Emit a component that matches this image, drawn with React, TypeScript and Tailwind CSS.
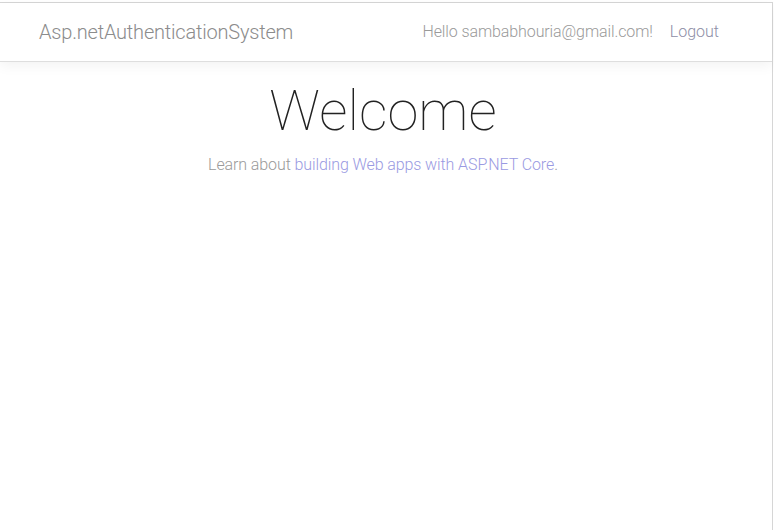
export default function App() {
  return (
    <div className="h-[530px] w-[774px] overflow-hidden bg-white pt-[2px] font-['Roboto',sans-serif] font-light">
      <div className="h-[528px] w-[773px] border-t border-r border-[#d6d6d6]">
        <header className="flex h-[59px] items-center justify-between border-b border-[#dedede] pl-[39px] pr-[53px] shadow-[0_4px_12px_rgba(0,0,0,0.05)]">
          <a className="text-[20px] tracking-[-0.2px] text-[#8c8c8c]">Asp.netAuthenticationSystem</a>
          <nav className="flex items-center gap-[17px] text-[16px]">
            <span className="tracking-[-0.1px] text-[#9a9a9a]">Hello sambabhouria@gmail.com!</span>
            <a className="text-[#8e8ea6]">Logout</a>
          </nav>
        </header>
        <main className="w-[766px] pt-[14px] text-center">
          <h1 className="text-[56px] leading-[70px] font-thin text-[#222]">Welcome</h1>
          <p className="mt-[7px] text-[16px] tracking-[-0.1px] text-[#9a9a9a]">
            Learn about <a className="text-[#9a9ae2]">building Web apps with ASP.NET Core</a>.
          </p>
        </main>
      </div>
    </div>
  )
}
